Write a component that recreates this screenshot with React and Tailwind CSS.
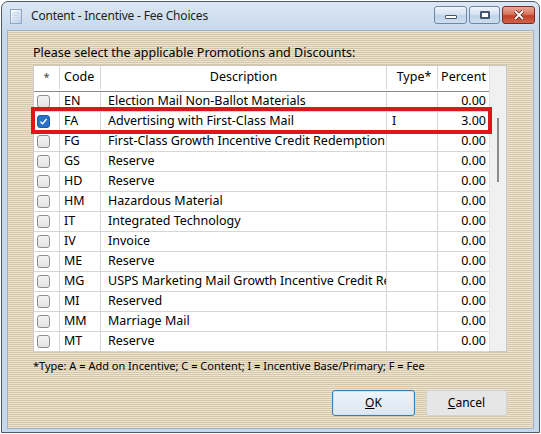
import React from "react"

const rows = [
	{ code: "EN", desc: "Election Mail Non-Ballot Materials", type: "", pct: "0.00" },
	{ code: "FA", desc: "Advertising with First-Class Mail", type: "I", pct: "3.00", checked: true },
	{ code: "FG", desc: "First-Class Growth Incentive Credit Redemption", type: "", pct: "0.00" },
	{ code: "GS", desc: "Reserve", type: "", pct: "0.00" },
	{ code: "HD", desc: "Reserve", type: "", pct: "0.00" },
	{ code: "HM", desc: "Hazardous Material", type: "", pct: "0.00" },
	{ code: "IT", desc: "Integrated Technology", type: "", pct: "0.00" },
	{ code: "IV", desc: "Invoice", type: "", pct: "0.00" },
	{ code: "ME", desc: "Reserve", type: "", pct: "0.00" },
	{ code: "MG", desc: "USPS Marketing Mail Growth Incentive Credit Redemption", type: "", pct: "0.00" },
	{ code: "MI", desc: "Reserved", type: "", pct: "0.00" },
	{ code: "MM", desc: "Marriage Mail", type: "", pct: "0.00" },
	{ code: "MT", desc: "Reserve", type: "", pct: "0.00" },
]

const CheckBox = ({ checked }) =>
	checked ? (
		<span className="w-[13px] h-[13px] rounded-[3px] bg-[#2a6fc9] border border-[#1d5aa8] flex items-center justify-center">
			<svg width="9" height="9" viewBox="0 0 9 9">
				<path d="M1.5 4.8 L3.6 6.8 L7.6 2" stroke="#fff" strokeWidth="1.4" fill="none" />
			</svg>
		</span>
	) : (
		<span className="w-[13px] h-[13px] rounded-[3px] border border-[#8d8d8d] bg-[linear-gradient(180deg,#f4f4f4,#e2e2e2)]" />
	)

const TitleButton = ({ kind }) => {
	if (kind === "close")
		return (
			<div className="w-[33px] h-[18px] rounded-[3px] border border-[#7a2a1e] bg-[linear-gradient(180deg,#e9a897_0%,#d9745e_45%,#c2412b_55%,#d0634a_100%)] flex items-center justify-center">
				<svg width="12" height="10" viewBox="0 0 12 10">
					<path d="M2 1 L10 9 M10 1 L2 9" stroke="#5a1a10" strokeWidth="3.2" />
					<path d="M2 1 L10 9 M10 1 L2 9" stroke="#fff" strokeWidth="1.8" />
				</svg>
			</div>
		)
	return (
		<div
			className={`${kind === "min" ? "w-[33px]" : "w-[31px]"} h-[18px] rounded-[3px] border border-[#6a87a8] bg-[linear-gradient(180deg,#eef4fa_0%,#d6e3f1_45%,#bfd2e7_55%,#cfdeee_100%)] flex items-center justify-center`}
		>
			{kind === "min" ? (
				<span className="mt-[5px] w-[12px] h-[4px] bg-white border border-[#44566d] rounded-[1px]" />
			) : (
				<span className="w-[10px] h-[8px] border-2 border-[#44566d] bg-white rounded-[1px]" />
			)}
		</div>
	)
}

const App = () => {
	return (
		<div className="w-[541px] h-[434px] bg-white font-['Noto_Sans',sans-serif] text-black">
			<div className="w-[539px] h-[432px] ml-[1px] mt-[1px] border border-[#4b5866] rounded-t-[7px] bg-[linear-gradient(180deg,#dbe7f4,#c7d8eb_30px,#c7d8eb)] flex flex-col">
				{/* title bar */}
				<div className="h-[28px] flex items-center pl-[8px] pr-[4px]">
					<svg width="12" height="15" viewBox="0 0 12 15" className="mt-[1px]">
						<defs>
							<linearGradient id="doc" x1="0" y1="0" x2="1" y2="1">
								<stop offset="0" stopColor="#ffffff" />
								<stop offset="1" stopColor="#b9cde6" />
							</linearGradient>
						</defs>
						<rect x="0.5" y="0.5" width="11" height="14" fill="url(#doc)" stroke="#8fa6c4" />
						<path d="M2.5 4h7M2.5 6.5h7M2.5 9h7M2.5 11.5h5" stroke="#c9d7e8" />
					</svg>
					<span className="ml-[9px] text-[12px] tracking-[-0.2px] text-[#1e1e1e]">Content - Incentive - Fee Choices</span>
					<div className="ml-auto flex gap-[2px] mt-[-3px]">
						<TitleButton kind="min" />
						<TitleButton kind="max" />
						<TitleButton kind="close" />
					</div>
				</div>

				{/* client area */}
				<div className="relative flex-1 mx-[5px] mb-[3px] border border-[#9fb2c8] bg-[repeating-linear-gradient(180deg,#ece3d1_0px,#ece3d1_1px,#d5c7aa_1px,#d5c7aa_2px)] pl-[25px] pt-[14px]">
					<p className="text-[12.5px] leading-[16px]">Please select the applicable Promotions and Discounts:</p>

					<div className="mt-[4px] w-[474px] h-[287px] flex bg-white border border-[#c9c9c9]">
						<div className="w-[455px] flex flex-col text-[12.5px]">
							<div className="h-[26px] pb-[2px] flex border-b border-[#8a8a8a] shrink-0">
								<div className="w-[26px] border-r border-[#d6d6d6] flex items-center justify-center text-[11px] text-[#444]">*</div>
								<div className="w-[41px] border-r border-[#d6d6d6] flex items-center pl-[4px]">Code</div>
								<div className="w-[286px] border-r border-[#d6d6d6] flex items-center justify-center">Description</div>
								<div className="w-[51px] border-r border-[#d6d6d6] flex items-center justify-center pl-[4px]">Type*</div>
								<div className="w-[51px] flex items-center justify-center">Percent</div>
							</div>
							{rows.map((row) => (
								<div key={row.code} className="h-[20px] flex border-b border-[#d6d6d6] shrink-0">
									<div className="w-[26px] border-r border-[#d6d6d6] flex items-center pl-[3px]">
										<CheckBox checked={row.checked} />
									</div>
									<div className="w-[41px] border-r border-[#d6d6d6] flex items-center pl-[4px]">{row.code}</div>
									<div className="w-[286px] border-r border-[#d6d6d6] flex items-center pl-[7px] whitespace-nowrap overflow-hidden">
										{row.desc}
									</div>
									<div className="w-[51px] border-r border-[#d6d6d6] flex items-center pl-[5px]">{row.type}</div>
									<div className="w-[51px] flex items-center justify-end pr-[3px]">{row.pct}</div>
								</div>
							))}
						</div>
						<div className="flex-1 bg-[#f0f0f0] border-l border-[#e2e2e2] flex justify-center pt-[52px]">
							<span className="w-[2px] h-[64px] bg-[#8b8b8b]" />
						</div>
					</div>

					<p className="mt-[7px] text-[11px] leading-[14px]">
						*Type: A = Add on Incentive; C = Content; I = Incentive Base/Primary; F = Fee
					</p>

					<div className="mt-[17px] w-[474px] flex justify-end gap-[11px] text-[12px]">
						<button className="w-[83px] h-[26px] rounded-[3px] border border-[#3b7db3] bg-[linear-gradient(180deg,#edf3f9,#dce7f2)] shadow-[inset_0_0_0_1px_#cfe3f4]">
							<u>O</u>K
						</button>
						<button className="w-[81px] h-[26px] rounded-[3px] border border-[#d2d2d2] bg-[#e6e6e6]">
							<u>C</u>ancel
						</button>
					</div>

					{/* highlight annotation */}
					<div className="absolute left-[23px] top-[76px] w-[461px] h-[27px] border-[4px] border-[#e0141b]" />
				</div>
			</div>
		</div>
	)
}

export default App
